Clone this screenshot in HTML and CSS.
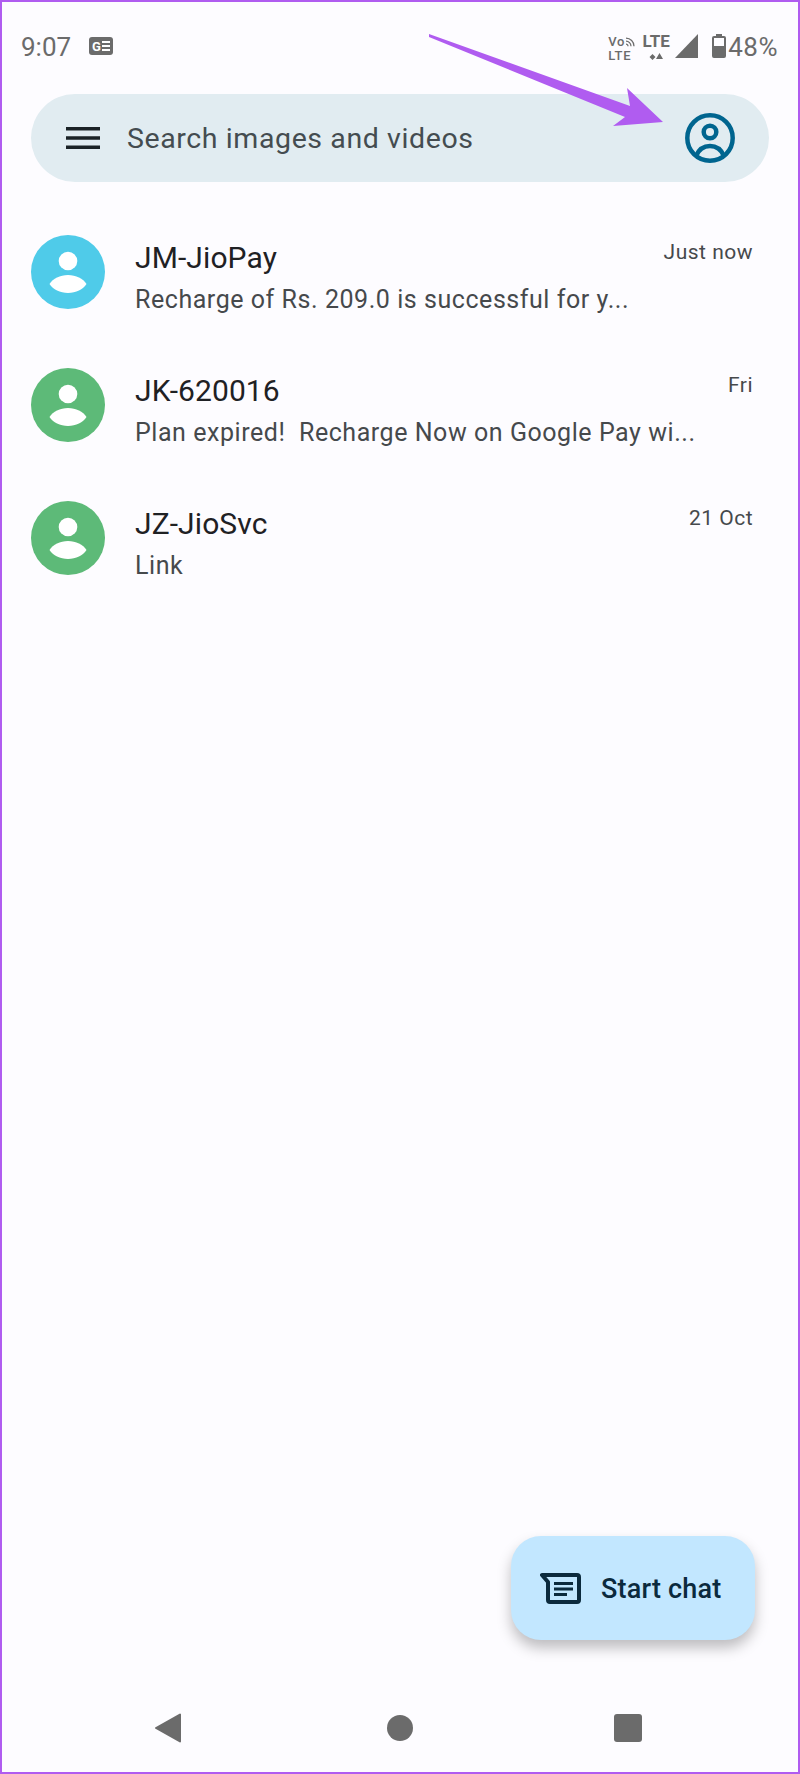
FILE: index.html
```html
<!doctype html>
<html>
<head>
<meta charset="utf-8">
<title>Messages</title>
	<link rel="stylesheet" href="styles.css">
</head>

<body>
	<div class="phone">
		<div class="status">
			<span class="clock">9:07</span>
			<svg class="news" width="24" height="18" viewBox="0 0 24 18">
				<rect width="24" height="18" rx="3" fill="#6b6b6b"/>
				<text x="3" y="13.500" class="news-g">G</text>
				<path d="M13 5h8M13 9h8M13 13h8" stroke="#fff" stroke-width="1.800" fill="none"/>
			</svg>
			<div class="status-right">
				<div class="volte">
					<div class="vo">Vo<svg width="10" height="10" viewBox="0 0 10 10"><path d="M1 1.200a8 8 0 0 1 8 8M1 4.200a5 5 0 0 1 5 5M1 7.200a2 2 0 0 1 2 2" stroke="#6b6b6b" stroke-width="1.200" fill="none"/></svg></div>
					<div>LTE</div>
				</div>
				<div class="lte">
					<div>LTE</div>
					<svg width="14" height="7" viewBox="0 0 14 7"><path d="M3.500 1 6.500 4 3.500 7 .5 4zM10.500 0 14 6H7z" fill="#6b6b6b"/></svg>
				</div>
				<svg class="signal" width="23" height="24" viewBox="0 0 23 24"><path d="M23 0V24H0z" fill="#6b6b6b"/></svg>
				<svg class="battery" width="14" height="24" viewBox="0 0 14 24">
					<path d="M4 0h6v2h2a2 2 0 0 1 2 2v18a2 2 0 0 1-2 2H2a2 2 0 0 1-2-2V4a2 2 0 0 1 2-2h2z" fill="#6b6b6b"/>
					<rect x="2" y="4" width="10" height="8" fill="#fdfcff"/>
				</svg>
				<span class="percent">48%</span>
			</div>
		</div>

		<div class="search">
			<svg class="menu" width="34" height="22" viewBox="0 0 34 22"><path d="M0 1.700h34M0 11h34M0 20.300h34" stroke="#1a2226" stroke-width="3.400"/></svg>
			<span class="search-text">Search images and videos</span>
			<svg class="account" width="50" height="50" viewBox="0 0 50 50">
				<circle cx="25" cy="25" r="22.700" fill="none" stroke="#00658f" stroke-width="4.500"/>
				<circle cx="25" cy="19" r="6.300" fill="none" stroke="#00658f" stroke-width="4.500"/>
				<path d="M11 43c3-7 8-10 14-10s11 3 14 10" fill="none" stroke="#00658f" stroke-width="4.500"/>
			</svg>
		</div>

		<div class="list">
			<div class="row">
				<svg class="avatar" width="74" height="74" viewBox="0 0 74 74">
					<circle cx="37" cy="37" r="37" fill="#4fcbe9"/>
					<circle cx="37" cy="26" r="9.300" fill="#fff"/>
					<path d="M18.500 49C22 43.500 29 40 37 40s15 3.500 18.500 9C52 54.500 45 58 37 58s-15-3.500-18.500-9z" fill="#fff"/>
				</svg>
				<div class="row-text">
					<div class="name">JM-JioPay</div>
					<div class="preview">Recharge of Rs. 209.0 is successful for y...</div>
				</div>
				<div class="when">Just now</div>
			</div>
			<div class="row">
				<svg class="avatar" width="74" height="74" viewBox="0 0 74 74">
					<circle cx="37" cy="37" r="37" fill="#5dba78"/>
					<circle cx="37" cy="26" r="9.300" fill="#fff"/>
					<path d="M18.500 49C22 43.500 29 40 37 40s15 3.500 18.500 9C52 54.500 45 58 37 58s-15-3.500-18.500-9z" fill="#fff"/>
				</svg>
				<div class="row-text">
					<div class="name">JK-620016</div>
					<div class="preview">Plan expired!&nbsp; Recharge Now on Google Pay wi...</div>
				</div>
				<div class="when">Fri</div>
			</div>
			<div class="row">
				<svg class="avatar" width="74" height="74" viewBox="0 0 74 74">
					<circle cx="37" cy="37" r="37" fill="#5dba78"/>
					<circle cx="37" cy="26" r="9.300" fill="#fff"/>
					<path d="M18.500 49C22 43.500 29 40 37 40s15 3.500 18.500 9C52 54.500 45 58 37 58s-15-3.500-18.500-9z" fill="#fff"/>
				</svg>
				<div class="row-text">
					<div class="name">JZ-JioSvc</div>
					<div class="preview">Link</div>
				</div>
				<div class="when">21 Oct</div>
			</div>
		</div>

		<div class="fab">
			<svg class="fab-icon" width="41" height="31" viewBox="0 0 41 31">
				<path d="M2 2H37a2 2 0 0 1 2 2V27a2 2 0 0 1-2 2H10a2 2 0 0 1-2-2V9z" fill="none" stroke="#0b2a3d" stroke-width="4" stroke-linejoin="round"/>
				<path d="M14 10.500H33M14 16H33M14 21.500H27" stroke="#0b2a3d" stroke-width="3"/>
			</svg>
			<span>Start chat</span>
		</div>

		<div class="nav">
			<svg width="26" height="30" viewBox="0 0 26 30"><path d="M25 1.500V28.500L1 15z" fill="#6b6b6b" stroke="#6b6b6b" stroke-width="2" stroke-linejoin="round"/></svg>
			<div class="nav-home"></div>
			<div class="nav-recent"></div>
		</div>

		<svg class="arrow" width="240" height="100" viewBox="0 0 240 100">
			<path d="M0 0 201 72 198 54 234 88 184 92 196 83 0 3z" fill="#b05cf0"/>
		</svg>
	</div>
</body>
</html>
```

FILE: styles.css
```css
*{
	margin: 0;
	padding: 0;
	box-sizing: border-box;
}
body{
	font-family: Roboto, "Noto Sans", sans-serif;
	background-color: #fdfcff;
}
.phone{
	position: relative;
	width: 800px;
	height: 1774px;
	border: 2px solid #b05cf0;
	background-color: #fdfcff;
	display: flex;
	flex-direction: column;
	overflow: hidden;
}

/* status bar */
.status{
	height: 92px;
	padding: 28px 20px 0 19px;
	display: flex;
	align-items: flex-start;
	color: #6b6b6b;
}
.clock{
	font-size: 26px;
	line-height: 34px;
	width: 68px;
}
.news{
	margin-top: 7px;
}
.news-g{
	font-size: 13px;
	font-weight: 700;
	fill: #fff;
}
.status-right{
	margin-left: auto;
	display: flex;
	align-items: flex-start;
}
.volte{
	font-size: 13px;
	line-height: 14px;
	font-weight: 500;
	letter-spacing: 0.8px;
	width: 34px;
	margin-top: 5px;
}
.vo{
	display: flex;
	align-items: center;
}
.lte{
	margin-left: 0;
	width: 28px;
	font-size: 17px;
	line-height: 15px;
	font-weight: 700;
	text-align: center;
	margin-top: 4px;
}
.lte svg{
	display: block;
	margin: 4px auto 0;
}
.signal{
	margin-left: 5px;
	margin-top: 4px;
}
.battery{
	margin-left: 14px;
	margin-top: 4px;
}
.percent{
	font-size: 26px;
	line-height: 34px;
	margin-left: 2px;
	letter-spacing: 0.5px;
}

/* search */
.search{
	margin: 0 29px;
	height: 88px;
	border-radius: 44px;
	background-color: #e1ecf1;
	display: flex;
	align-items: center;
	padding: 0 34px 0 35px;
}
.search-text{
	margin-left: 27px;
	font-size: 28.500px;
	letter-spacing: 0.6px;
	color: #444c50;
}
.account{
	margin-left: auto;
}

/* conversations */
.list{
	padding-top: 53px;
}
.row{
	height: 133px;
	padding: 0 45px 0 29px;
	display: flex;
	align-items: flex-start;
}
.avatar{
	flex-shrink: 0;
}
.row-text{
	margin-left: 30px;
	margin-top: 3px;
	flex: 1;
}
.name{
	font-size: 30px;
	line-height: 40px;
	letter-spacing: 0.1px;
	color: #1f2124;
}
.preview{
	font-size: 25px;
	line-height: 40px;
	letter-spacing: 0.55px;
	margin-top: 2px;
	color: #46494c;
}
.when{
	font-size: 21px;
	line-height: 30px;
	letter-spacing: 0.5px;
	margin-top: 2px;
	color: #46494c;
}

/* start chat */
.fab{
	margin: auto 43px 0 auto;
	width: 244px;
	height: 104px;
	border-radius: 30px;
	background-color: #c2e7ff;
	box-shadow: 0 8px 14px rgba(0,0,0,0.25);
	display: flex;
	align-items: center;
	padding: 1px 0 0 29px;
	color: #0b2a3d;
	font-size: 27px;
	font-weight: 500;
	letter-spacing: 0.2px;
}
.fab span{
	margin-left: 20px;
}

/* nav buttons */
.nav{
	height: 132px;
	padding-top: 44px;
	display: flex;
	align-items: center;
}
.nav svg{
	margin-left: 153px;
}
.nav-home{
	width: 26px;
	height: 26px;
	border-radius: 50%;
	background-color: #6b6b6b;
	margin-left: 206px;
}
.nav-recent{
	width: 28px;
	height: 28px;
	border-radius: 3px;
	background-color: #6b6b6b;
	margin-left: 201px;
}

.arrow{
	position: absolute;
	left: 427px;
	top: 32px;
}
```
